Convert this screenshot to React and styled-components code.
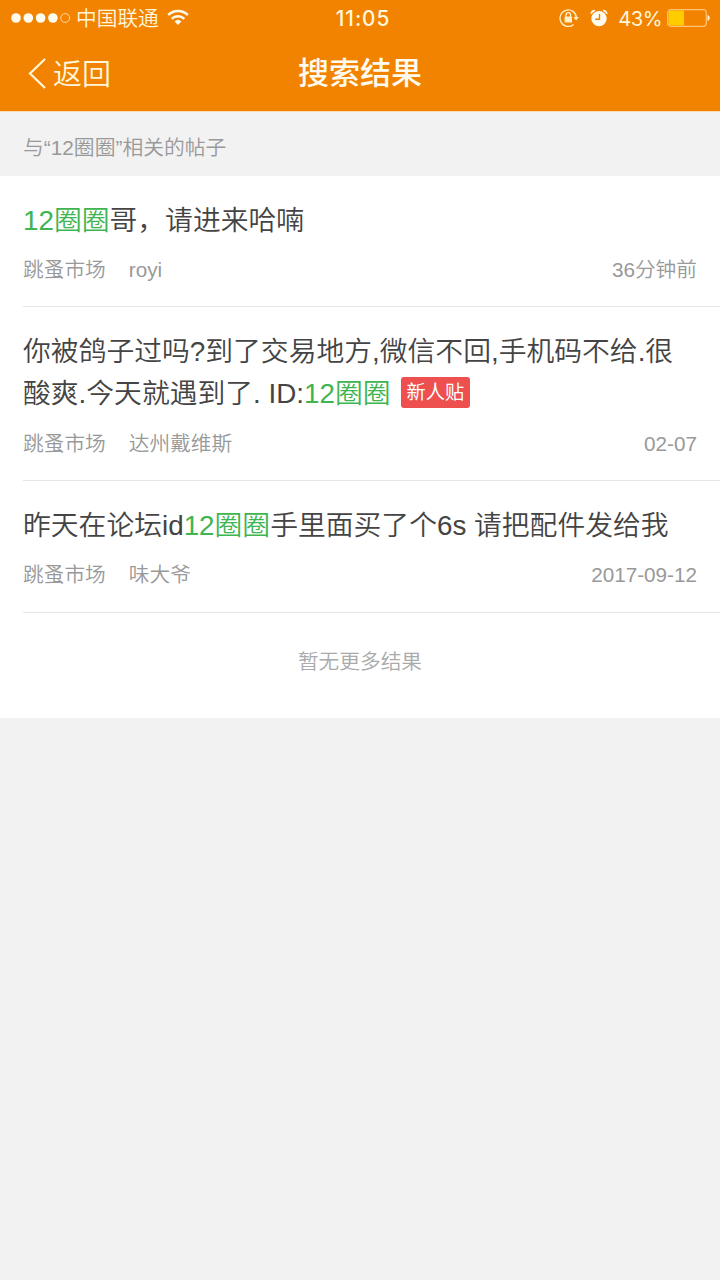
import React from 'react';
import styled, { createGlobalStyle } from 'styled-components';

const GlobalStyle = createGlobalStyle`
  body {
    margin: 0;
    background: #f2f2f2;
    font-family: 'Liberation Sans', 'Noto Sans CJK SC', sans-serif;
    font-weight: 350;
  }

  * {
    box-sizing: border-box;
  }
`;

const Page = styled.div`
  min-height: 1280px;
  background: #f2f2f2;
`;

const Header = styled.header`
  height: 112px;
  border-bottom: 1px solid #fbdcb2;
  background: #f28300;
  color: #fff6dc;
`;

const StatusBar = styled.div`
  display: grid;
  grid-template-columns: 1fr auto 1fr;
  align-items: center;
  height: 36px;
  padding: 0 10px 0 11px;
`;

const StatusGroup = styled.div`
  display: flex;
  align-items: center;
  justify-content: ${(props) => (props.$end ? 'flex-end' : 'flex-start')};
`;

const Carrier = styled.span`
  margin: 0 8px 0 5px;
  padding-top: 2px;
  font-size: 20.7px;
  line-height: 34px;
`;

const Clock = styled.span`
  padding-left: 5px;
  font-family: Inter, sans-serif;
  font-size: 20.8px;
  font-weight: 500;
  letter-spacing: 0.9px;
`;

const AlarmSlot = styled.span`
  display: flex;
  margin-left: 11px;
`;

const Percent = styled.span`
  margin: 0 5px 0 10px;
  font-family: Inter, sans-serif;
  font-size: 20.2px;
  font-weight: 400;
  letter-spacing: -0.5px;
`;

const NavBar = styled.nav`
  display: grid;
  grid-template-columns: 1fr auto 1fr;
  align-items: center;
  height: 75px;
  padding: 0 28px;
`;

const BackButton = styled.button`
  display: flex;
  align-items: center;
  gap: 6px;
  padding: 0;
  border: none;
  background: none;
  color: inherit;
  font-family: inherit;
  font-weight: 350;
  font-size: 29px;
  line-height: 40px;
`;

const BackLabel = styled.span`
  padding-top: 2px;
`;

const PageTitle = styled.h1`
  margin: 0;
  color: #fffbee;
  font-size: 31px;
  font-weight: 500;
  line-height: 44px;
`;

const Summary = styled.div`
  height: 64px;
  padding: 4px 23px 0;
  color: #999;
  font-size: 20.8px;
  line-height: 64px;
`;

const ResultList = styled.main`
  background: #fff;
`;

const ResultItem = styled.article`
  margin-left: 23px;
  padding: 23.6px 23px 21.45px 0;
  border-bottom: 1px solid #e6e6e6;
`;

const ResultTitle = styled.h2`
  margin: 0;
  padding-right: 12px;
  color: #444;
  font-size: 27.8px;
  font-weight: 350;
  line-height: 42.3px;
`;

const Highlight = styled.span`
  color: #3fb551;
`;

const Tag = styled.span`
  display: inline-block;
  height: 31px;
  margin-left: 10px;
  padding: 0 6px;
  border-radius: 3px;
  background: #ee4f4f;
  color: #fff;
  font-size: 19.2px;
  font-weight: 400;
  line-height: 32px;
  vertical-align: 4px;
`;

const Meta = styled.div`
  display: flex;
  gap: 23px;
  margin-top: 13.1px;
  color: #999;
  font-size: 20.7px;
  line-height: 30px;
`;

const Time = styled.span`
  margin-left: auto;
`;

const NoMore = styled.div`
  height: 105px;
  color: #aaa;
  font-size: 20.7px;
  line-height: 98px;
  text-align: center;
`;

const keyword = '12圈圈';

const results = [
  { before: '', after: '哥，请进来哈喃', board: '跳蚤市场', author: 'royi', time: '36分钟前' },
  {
    before: '你被鸽子过吗?到了交易地方,微信不回,手机码不给.很酸爽.今天就遇到了. ID:',
    after: '',
    tag: '新人贴',
    board: '跳蚤市场',
    author: '达州戴维斯',
    time: '02-07',
  },
  {
    before: '昨天在论坛id',
    after: '手里面买了个6s 请把配件发给我',
    board: '跳蚤市场',
    author: '味大爷',
    time: '2017-09-12',
  },
];

const SignalIcon = () => (
  <svg width="60" height="12" viewBox="0 0 60 12" fill="#fffbee">
    <circle cx="5" cy="6" r="4.8" />
    <circle cx="17.3" cy="6" r="4.8" />
    <circle cx="29.6" cy="6" r="4.8" />
    <circle cx="41.9" cy="6" r="4.8" />
    <circle cx="54.2" cy="6" r="4.4" fill="none" stroke="#ffd89a" strokeWidth="1" />
  </svg>
);

const WifiIcon = () => (
  <svg width="22" height="18" viewBox="0 0 22 18" fill="none" stroke="#fffbee" strokeWidth="2.5">
    <path d="M1.2 6a14 14 0 0 1 19.6 0" />
    <path d="M4.7 9.8a9 9 0 0 1 12.6 0" />
    <path d="M7.6 12.4a5 5 0 0 1 6.8 0L11 16z" fill="#fffbee" stroke="none" />
  </svg>
);

const RotationLockIcon = () => (
  <svg width="20" height="20" viewBox="0 0 20 20" fill="none" stroke="#fff0c8" strokeWidth="1.3">
    <path d="M14.6 16.4A8.2 8.2 0 1 1 17.4 9.5" />
    <path d="M14.4 9h5.5L17.1 12.4z" fill="#fff0c8" stroke="none" />
    <path d="M7 9.5V7a2.3 2.3 0 0 1 4.6 0v2.5" />
    <rect x="5.6" y="8.6" width="7.4" height="5.9" rx="0.6" fill="#fff0c8" stroke="none" />
  </svg>
);

const AlarmIcon = () => (
  <svg width="18" height="18" viewBox="0 0 18 18">
    <circle cx="9" cy="9.6" r="7.7" fill="#fffbee" />
    <path d="M1 4.8A5 5 0 0 1 4.8 1.4M17 4.8A5 5 0 0 0 13.2 1.4" fill="none" stroke="#fffbee" strokeWidth="1.6" />
    <path d="M9.5 5v5.2H5.2" fill="none" stroke="#f28300" strokeWidth="1.4" />
  </svg>
);

const BatteryIcon = () => (
  <svg width="43" height="18" viewBox="0 0 43 18">
    <rect x="0.7" y="0.7" width="38.6" height="16.6" rx="3" fill="none" stroke="#ffc375" strokeWidth="1.2" />
    <path d="M3 1.5H17v15H3A1.5 1.5 0 0 1 1.5 15V3A1.5 1.5 0 0 1 3 1.5z" fill="#ffcc00" />
    <path d="M40.5 6c3 .8 3 5.2 0 6z" fill="#fff0c8" />
  </svg>
);

const ChevronIcon = () => (
  <svg width="19" height="32" viewBox="0 0 19 32" fill="none" stroke="#fff6dc" strokeWidth="2.2">
    <path d="M17 1L2 15.5l15 14.5" />
  </svg>
);

const App = () => {
  return (
    <>
      <GlobalStyle />
      <Page lang="zh-CN">
        <Header>
          <StatusBar>
            <StatusGroup>
              <SignalIcon />
              <Carrier>中国联通</Carrier>
              <WifiIcon />
            </StatusGroup>
            <Clock>11:05</Clock>
            <StatusGroup $end>
              <RotationLockIcon />
              <AlarmSlot>
                <AlarmIcon />
              </AlarmSlot>
              <Percent>43%</Percent>
              <BatteryIcon />
            </StatusGroup>
          </StatusBar>
          <NavBar>
            <BackButton>
              <ChevronIcon />
              <BackLabel>返回</BackLabel>
            </BackButton>
            <PageTitle>搜索结果</PageTitle>
          </NavBar>
        </Header>
        <Summary>与“{keyword}”相关的帖子</Summary>
        <ResultList>
          {results.map((item) => (
            <ResultItem key={item.time}>
              <ResultTitle>
                {item.before}
                <Highlight>{keyword}</Highlight>
                {item.after}
                {item.tag && <Tag>{item.tag}</Tag>}
              </ResultTitle>
              <Meta>
                <span>{item.board}</span>
                <span>{item.author}</span>
                <Time>{item.time}</Time>
              </Meta>
            </ResultItem>
          ))}
          <NoMore>暂无更多结果</NoMore>
        </ResultList>
      </Page>
    </>
  );
};

export default App;
